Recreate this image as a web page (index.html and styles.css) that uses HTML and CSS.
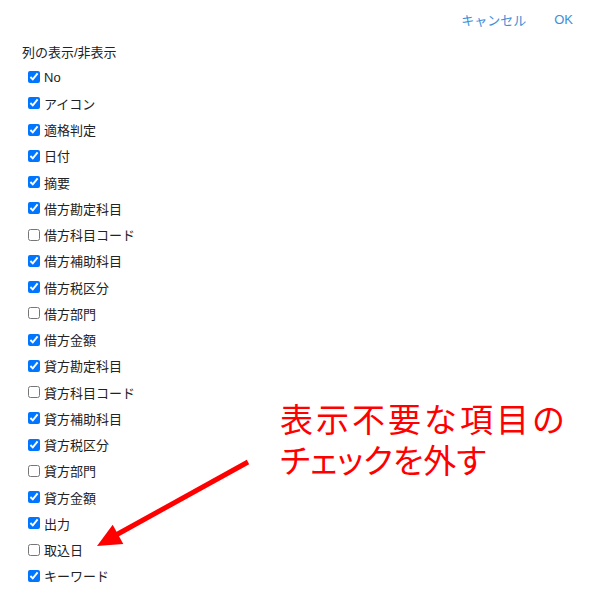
FILE: index.html
```html
<!DOCTYPE html>
<html>
	<head>
		<meta charset="UTF-8">
		<title>列の表示/非表示</title>
		<link rel="stylesheet" href="styles.css">
	</head>
	<body>
		<div class="dialog">
			<div class="actions">
				<a href="#" class="btn">キャンセル</a>
				<a href="#" class="btn">OK</a>
			</div>
			<p class="title">列の表示/非表示</p>
			<ul class="columns">
				<li><label><input type="checkbox" checked>No</label></li>
				<li><label><input type="checkbox" checked>アイコン</label></li>
				<li><label><input type="checkbox" checked>適格判定</label></li>
				<li><label><input type="checkbox" checked>日付</label></li>
				<li><label><input type="checkbox" checked>摘要</label></li>
				<li><label><input type="checkbox" checked>借方勘定科目</label></li>
				<li><label><input type="checkbox">借方科目コード</label></li>
				<li><label><input type="checkbox" checked>借方補助科目</label></li>
				<li><label><input type="checkbox" checked>借方税区分</label></li>
				<li><label><input type="checkbox">借方部門</label></li>
				<li><label><input type="checkbox" checked>借方金額</label></li>
				<li><label><input type="checkbox" checked>貸方勘定科目</label></li>
				<li><label><input type="checkbox">貸方科目コード</label></li>
				<li><label><input type="checkbox" checked>貸方補助科目</label></li>
				<li><label><input type="checkbox" checked>貸方税区分</label></li>
				<li><label><input type="checkbox">貸方部門</label></li>
				<li><label><input type="checkbox" checked>貸方金額</label></li>
				<li><label><input type="checkbox" checked>出力</label></li>
				<li><label><input type="checkbox">取込日</label></li>
				<li><label><input type="checkbox" checked>キーワード</label></li>
			</ul>

			<!-- 注釈 -->
			<div class="note">
				<p class="note-line">表示不要な項目の</p>
				<p class="note-line note-kana">チェックを外す</p>
			</div>
			<svg class="arrow" width="603" height="608" viewBox="0 0 603 608">
				<line x1="248" y1="462" x2="116" y2="535" stroke="#ff0000" stroke-width="5"/>
				<polygon points="97,546 112.7,524.7 123.3,543.9" fill="#ff0000"/>
			</svg>
		</div>
	</body>
</html>
```

FILE: styles.css
```css
html, body {
	margin: 0;
	padding: 0;
	background: #ffffff;
}

.dialog {
	position: relative;
	width: 603px;
	height: 608px;
	font-family: "Liberation Sans", "Noto Sans CJK JP", sans-serif;
	font-size: 13px;
	color: #222222;
}

.actions {
	display: flex;
	justify-content: flex-end;
	align-items: center;
	gap: 28px;
	height: 38px;
	padding-right: 30px;
}

.btn {
	color: #3d8fd8;
	text-decoration: none;
	font-size: 13px;
}

.title {
	margin: 5px 0 0 22px;
	height: 20px;
	line-height: 20px;
}

.columns {
	list-style: none;
	margin: 1px 0 0 0;
	padding: 0 0 0 28px;
}

.columns li {
	height: 26.25px;
	display: flex;
	align-items: center;
}

.columns label {
	display: flex;
	align-items: center;
}

.columns input {
	width: 12px;
	height: 12px;
	margin: 0 4px 0 0;
}

.note {
	position: absolute;
	left: 280px;
	top: 398px;
	color: #ff0000;
	font-family: "Noto Sans CJK JP", sans-serif;
	font-size: 33px;
	font-weight: 400;
}

.note-line {
	margin: 0;
	height: 41px;
	line-height: 41px;
	letter-spacing: 3px;
}

.note-kana {
	letter-spacing: 0;
	font-feature-settings: "palt";
}

.arrow {
	position: absolute;
	left: 0;
	top: 0;
	pointer-events: none;
}
```
